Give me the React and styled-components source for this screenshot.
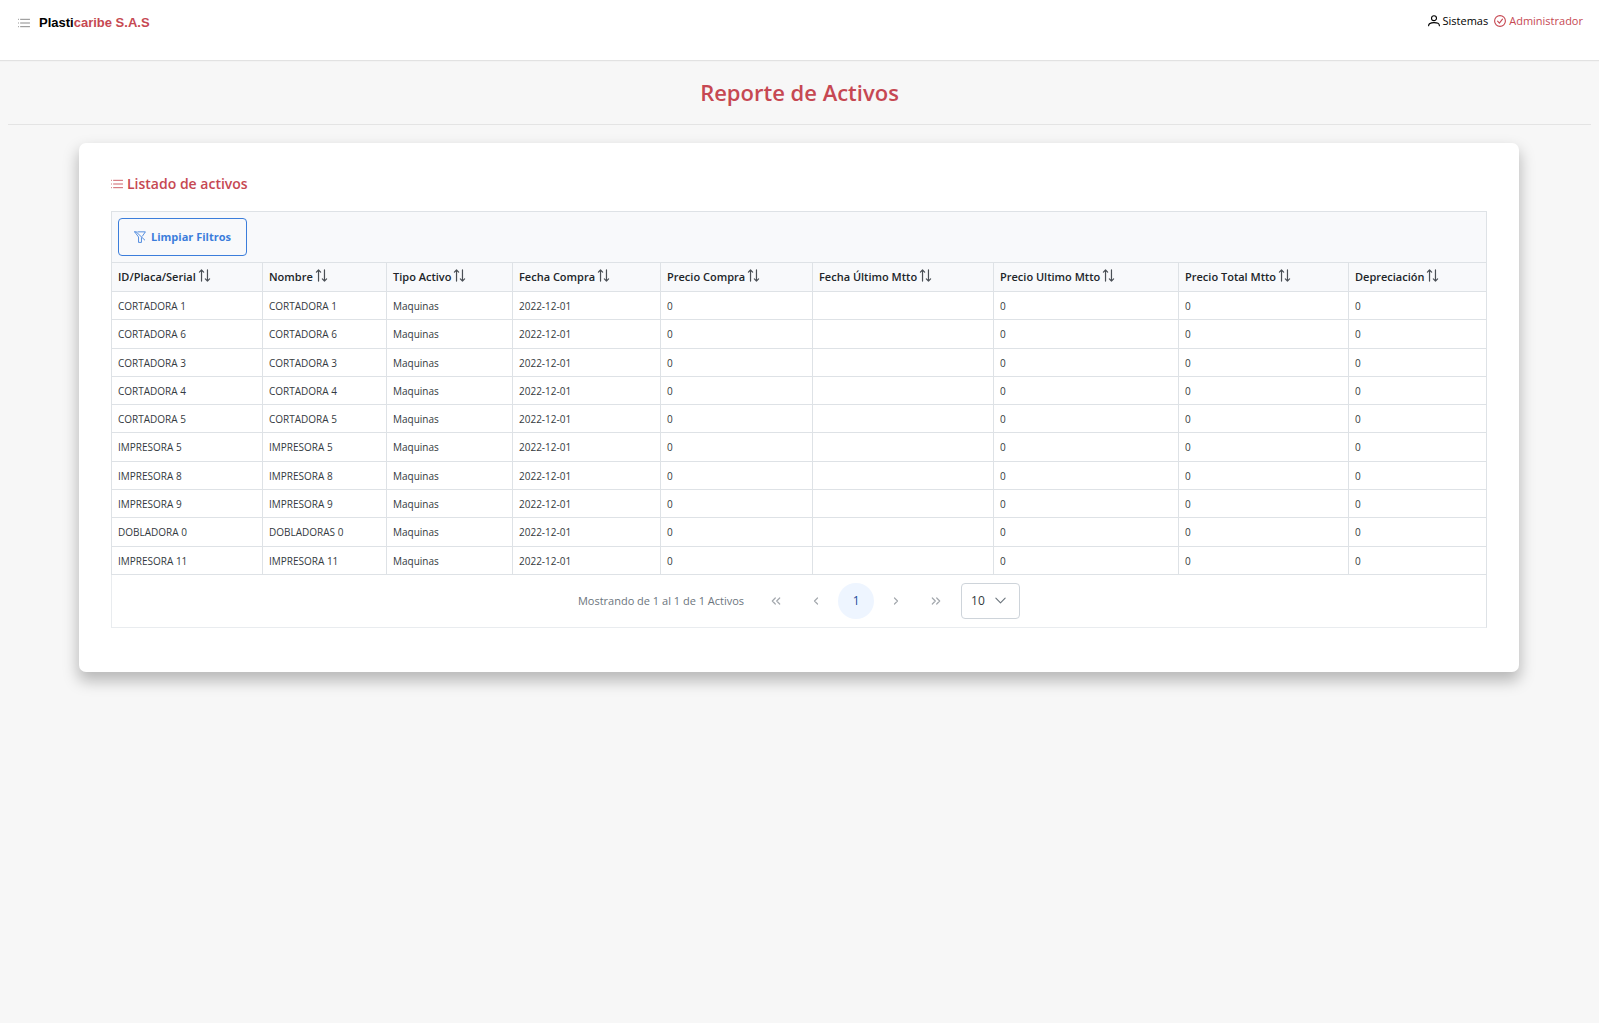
import React, { useState } from "react";
import styled, { createGlobalStyle } from "styled-components";

const GlobalStyle = createGlobalStyle`
  *, *::before, *::after { box-sizing: border-box; }
  body {
    margin: 0;
    background: #f7f7f7;
    color: #212529;
    font-family: "Open Sans", "Noto Sans", sans-serif;
    font-size: 12px;
  }
  button, select { font-family: inherit; }
`;

const red = "#c64852";
const line = "#dee2e6";

const Header = styled.header`
  display: flex;
  justify-content: space-between;
  align-items: flex-start;
  height: 60px;
  padding: 12px 16px 0 18px;
  background: #fff;
  box-shadow: 0 1px 1px #e2e2e2;
`;

const Brand = styled.div`
  display: flex;
  align-items: center;
  gap: 9px;
  color: #000;
  font-family: "Liberation Sans", sans-serif;
  font-size: 13px;
  font-weight: 700;
  line-height: 21px;
`;

const MenuButton = styled.button`
  display: flex;
  padding: 0;
  border: 0;
  background: none;
  color: #777;
`;

const Accent = styled.span`
  color: ${red};
`;

const Session = styled.div`
  display: flex;
  gap: 6px;
`;

const SessionItem = styled.span`
  display: flex;
  align-items: center;
  gap: 3px;
  color: ${(p) => (p.$accent ? red : "#000")};
  font-size: 11px;
  line-height: 17px;
`;

const PageTitle = styled.h1`
  margin: 0 8px;
  padding: 16px 0 15px;
  border-bottom: 1px solid #e4e4e4;
  color: ${red};
  font-size: 22px;
  font-weight: 600;
  line-height: 33px;
  text-align: center;
`;

const Card = styled.section`
  margin: 18px 80px 32px 79px;
  padding: 32px 32px 44px;
  border-radius: 7px;
  background: #fff;
  box-shadow: 0 8px 15px 1px rgba(0, 0, 0, 0.26);
`;

const CardTitle = styled.h2`
  display: flex;
  align-items: center;
  gap: 4px;
  margin: 0 0 18px;
  color: ${red};
  font-size: 14px;
  font-weight: 600;
  line-height: 18px;
`;

const Frame = styled.div`
  border: 1px solid ${line};
  border-left: 0;
  border-bottom-color: #e9ecef;
`;

const Toolbar = styled.div`
  display: flex;
  padding: 6px;
  border: solid ${line};
  border-width: 0 0 1px 1px;
  background: #f8f9fb;
`;

const ClearButton = styled.button`
  display: flex;
  align-items: center;
  gap: 5px;
  height: 38px;
  padding: 0 15px 1px;
  border: 1px solid #3b7ddb;
  border-radius: 4px;
  background: transparent;
  color: #3b7ddb;
  font-size: 11px;
  font-weight: 700;
`;

const Table = styled.table`
  width: 100%;
  border-collapse: separate;
  border-spacing: 0;
  table-layout: fixed;
  line-height: 1.3;
`;

const HeadCell = styled.th`
  height: 29px;
  padding: 0 0 0 6px;
  border: solid ${line};
  border-width: 0 0 1px 1px;
  background: #f8f9fb;
  color: #212529;
  text-align: left;
`;

const SortButton = styled.button`
  display: flex;
  align-items: center;
  gap: 2px;
  padding: 0;
  border: 0;
  background: none;
  color: inherit;
  font-size: 11px;
  font-weight: 600;
  line-height: 16px;
  white-space: nowrap;

  > svg { margin-bottom: 3px; color: #4a4f55; }
`;

const Cell = styled.td`
  padding: 7px 0 6px 6px;
  border: solid ${line};
  border-width: 0 0 1px 1px;
  color: #343a40;
  font-size: 10px;
  line-height: 1.43;
`;

const Paginator = styled.nav`
  display: flex;
  align-items: center;
  justify-content: center;
  gap: 4px;
  padding: 8px 0;
  border-left: 1px solid #e9ecef;
  color: #6c757d;
`;

const Report = styled.span`
  margin-right: 10px;
  font-size: 11px;
`;

const PageButton = styled.button`
  display: flex;
  align-items: center;
  justify-content: center;
  width: 36px;
  height: 36px;
  padding: 0;
  border: 0;
  border-radius: 50%;
  background: ${(p) => (p.$active ? "#eef5ff" : "transparent")};
  color: ${(p) => (p.$active ? "#1d4b9c" : "#a3a8ad")};
  font-size: 12px;
`;

const RowsPicker = styled.label`
  display: grid;
  align-items: center;
  width: 59px;
  height: 36px;
  margin-left: 3px;
  border: 1px solid #ced4da;
  border-radius: 4px;
  background: #fff;

  > select, > svg { grid-area: 1 / 1; }
  > svg { justify-self: end; margin-right: 12px; color: #6c757d; pointer-events: none; }
`;

const RowsSelect = styled.select`
  width: 100%;
  height: 34px;
  padding: 0 0 0 9px;
  border: 0;
  background: transparent;
  color: #343a40;
  font-size: 12px;
  appearance: none;
`;

const Svg = ({ size = 12, width = 1, children }) => (
  <svg width={size} height={size} viewBox="0 0 14 14" fill="none" stroke="currentColor"
    strokeWidth={width} strokeLinecap="round" strokeLinejoin="round" aria-hidden="true">
    {children}
  </svg>
);

const ListIcon = () => (
  <Svg><path d="M3 2.7h10.5M3 7h10.5M3 11.3h10.5M.6 2.7h.1M.6 7h.1M.6 11.3h.1" /></Svg>
);
const UserIcon = () => (
  <Svg width={1.3}><circle cx="7" cy="3.7" r="2.9" /><path d="M.7 12.5c0-2.6 2.2-3.6 6.3-3.6s6.3 1 6.3 3.6" /></Svg>
);
const CheckIcon = () => (
  <Svg width={1.3}><circle cx="7" cy="7" r="6.3" /><path d="M4.2 7.2l2.1 2.2 3.6-4.6" /></Svg>
);
const FilterSlashIcon = () => (
  <Svg><path d="M4.5 1H13.3L9.8 6M.8 1l4.5 6v6.3h3.4V8M2.5 1l10 9.5M.8 1h1.5" /></Svg>
);
const SortIcon = () => (
  <Svg size={13} width={1.3}><path d="M3.8 13V1M1.5 3.3L3.8 1l2.3 2.3M10.2 1v12M7.9 10.7l2.3 2.3 2.3-2.3" /></Svg>
);
const arrows = {
  first: "M6.3 4L3.3 7l3 3M10.7 4l-3 3 3 3",
  prev: "M8.5 4l-3 3 3 3",
  next: "M5.5 4l3 3-3 3",
  last: "M3.3 4l3 3-3 3M7.7 4l3 3-3 3",
};
const Arrow = ({ to }) => (
  <Svg size={14} width={1.2}><path d={arrows[to]} /></Svg>
);

const columns = [
  ["ID/Placa/Serial", 151],
  ["Nombre", 124],
  ["Tipo Activo", 126],
  ["Fecha Compra", 148],
  ["Precio Compra", 152],
  ["Fecha Último Mtto", 181],
  ["Precio Ultimo Mtto", 185],
  ["Precio Total Mtto", 170],
  ["Depreciación", 138],
];

const assets = [
  ["CORTADORA 1"],
  ["CORTADORA 6"],
  ["CORTADORA 3"],
  ["CORTADORA 4"],
  ["CORTADORA 5"],
  ["IMPRESORA 5"],
  ["IMPRESORA 8"],
  ["IMPRESORA 9"],
  ["DOBLADORA 0", "DOBLADORAS 0"],
  ["IMPRESORA 11"],
].map(([id, name = id]) => [id, name, "Maquinas", "2022-12-01", "0", "", "0", "0", "0"]);

export default function App() {
  const [rows, setRows] = useState("10");
  return (
    <>
      <GlobalStyle />
      <Header>
        <Brand>
          <MenuButton type="button" aria-label="Menú"><ListIcon /></MenuButton>
          <span>Plasti<Accent>caribe S.A.S</Accent></span>
        </Brand>
        <Session>
          <SessionItem><UserIcon />Sistemas</SessionItem>
          <SessionItem $accent><CheckIcon />Administrador</SessionItem>
        </Session>
      </Header>
      <main>
        <PageTitle>Reporte de Activos</PageTitle>
        <Card>
          <CardTitle><ListIcon />Listado de activos</CardTitle>
          <Frame>
            <Toolbar>
              <ClearButton type="button"><FilterSlashIcon />Limpiar Filtros</ClearButton>
            </Toolbar>
            <Table>
              <colgroup>
                {columns.map(([label, width]) => <col key={label} width={width} />)}
              </colgroup>
              <thead>
                <tr>
                  {columns.map(([label]) => (
                    <HeadCell key={label} scope="col">
                      <SortButton type="button">{label}<SortIcon /></SortButton>
                    </HeadCell>
                  ))}
                </tr>
              </thead>
              <tbody>
                {assets.map((asset) => (
                  <tr key={asset[0]}>
                    {asset.map((value, i) => <Cell key={columns[i][0]}>{value}</Cell>)}
                  </tr>
                ))}
              </tbody>
            </Table>
            <Paginator aria-label="Paginación">
              <Report>Mostrando de 1 al 1 de 1 Activos</Report>
              <PageButton type="button" aria-label="Primera"><Arrow to="first" /></PageButton>
              <PageButton type="button" aria-label="Anterior"><Arrow to="prev" /></PageButton>
              <PageButton type="button" $active>1</PageButton>
              <PageButton type="button" aria-label="Siguiente"><Arrow to="next" /></PageButton>
              <PageButton type="button" aria-label="Última"><Arrow to="last" /></PageButton>
              <RowsPicker>
                <RowsSelect aria-label="Filas por página" value={rows} onChange={(e) => setRows(e.target.value)}>
                  <option>10</option>
                  <option>25</option>
                  <option>50</option>
                </RowsSelect>
                <Svg size={13} width={1.2}><path d="M2 4.5l5 5 5-5" /></Svg>
              </RowsPicker>
            </Paginator>
          </Frame>
        </Card>
      </main>
    </>
  );
}
